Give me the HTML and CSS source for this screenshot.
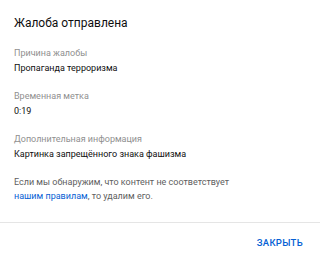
FILE: index.html
```html
<!DOCTYPE html>
<html lang="ru">
<head>
    <meta charset="UTF-8">
    <title>Жалоба отправлена</title>
    <link rel="stylesheet" href="styles.css">
</head>
<body>
    <div class="dialog">
        <div class="dialog-body">
            <h2 class="title">Жалоба отправлена</h2>
            <div class="field">
                <div class="label">Причина жалобы</div>
                <div class="value">Пропаганда терроризма</div>
            </div>
            <div class="field">
                <div class="label">Временная метка</div>
                <div class="value">0:19</div>
            </div>
            <div class="field">
                <div class="label">Дополнительная информация</div>
                <div class="value">Картинка запрещённого знака фашизма</div>
            </div>
            <p class="note">Если мы обнаружим, что контент не соответствует<br><a href="#">нашим правилам</a>, то удалим его.</p>
        </div>
        <div class="dialog-actions">
            <a href="#" class="btn">Закрыть</a>
        </div>
    </div>
</body>
</html>
```

FILE: styles.css
```css
body {
    margin: 0;
    background: #fff;
    font-family: Roboto, "Noto Sans", sans-serif;
}
.dialog {
    width: 320px;
}
.dialog-body {
    padding: 15px 14px 19px;
    border-bottom: 1px solid #e5e5e5;
}
.title {
    margin: 0 0 15px;
    font-size: 12px;
    font-weight: 400;
    line-height: 16px;
    color: #0f0f0f;
}
.field {
    margin-bottom: 14px;
}
.label {
    margin-bottom: 1px;
    font-size: 9px;
    line-height: 14px;
    color: #909090;
}
.value {
    font-size: 9px;
    line-height: 14px;
    color: #0f0f0f;
}
.note {
    margin: 14px 0 0;
    font-size: 9px;
    line-height: 14px;
    color: #606060;
}
.note a {
    color: #065fd4;
    text-decoration: none;
}
.dialog-actions {
    display: flex;
    justify-content: flex-end;
    padding: 13px 14px;
}
.btn {
    margin-right: 3px;
    font-size: 9.5px;
    font-weight: 500;
    line-height: 14px;
    color: #065fd4;
    text-decoration: none;
    text-transform: uppercase;
    letter-spacing: 0.3px;
}
```
